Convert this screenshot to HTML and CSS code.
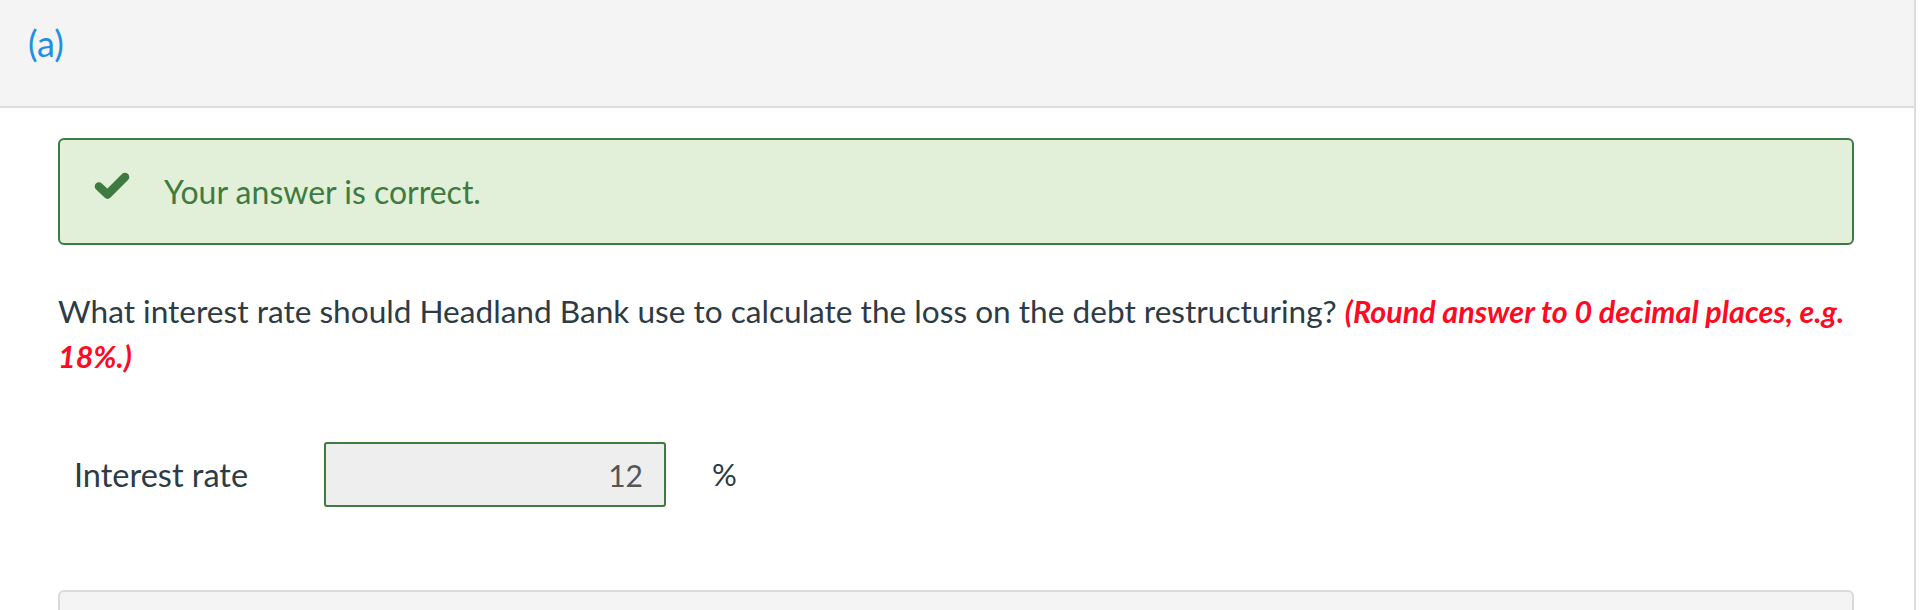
FILE: index.html
```html
<!DOCTYPE html>
<html lang="en">
<head>
<meta charset="utf-8">
<title>Part (a)</title>
<link rel="stylesheet" href="styles.css">
</head>
<body>
<div class="page">
  <header class="part-head">
    <span class="part-label">(a)</span>
  </header>
  <main class="part-body">
    <div class="feedback">
      <svg class="feedback-icon" width="36" height="28" viewBox="0 0 36 28" aria-hidden="true">
        <polyline points="5,14.5 13.5,22.5 31,5" fill="none" stroke="currentColor" stroke-width="8.5" stroke-linecap="round" stroke-linejoin="round"/>
      </svg>
      <span class="feedback-text">Your answer is correct.</span>
    </div>
    <p class="question">What interest rate should Headland Bank use to calculate the loss on the debt restructuring? <em class="hint">(Round answer to 0 decimal places, e.g. 18%.)</em></p>
    <div class="answer-row">
      <label class="answer-label" for="rate">Interest rate</label>
      <input class="answer-input" id="rate" type="text" value="12" readonly>
      <span class="answer-unit">%</span>
    </div>
    <div class="next-panel"></div>
  </main>
</div>
</body>
</html>
```
FILE: styles.css
```css
html, body {
  margin: 0;
  padding: 0;
  background: #ffffff;
}

body {
  font-family: Lato, "Open Sans", "Liberation Sans", sans-serif;
  color: #2d3b45;
}

.page {
  width: 1914px;
  border-right: 2px solid #dcdcdc;
  min-height: 610px;
  box-sizing: content-box;
}

.part-head {
  height: 106px;
  background: #f4f4f4;
  border-bottom: 2px solid #dcdcdc;
  display: flex;
  align-items: center;
  padding-left: 28px;
  box-sizing: content-box;
}

.part-label {
  font-size: 36px;
  color: #1e90e3;
  line-height: 1;
  margin-top: -20px;
}

.part-body {
  padding: 30px 60px 0 58px;
}

.feedback {
  height: 103px;
  border: 2px solid #3f7b40;
  border-radius: 6px;
  background: #e2f0d9;
  display: flex;
  align-items: center;
  padding-left: 34px;
  color: #3f7b40;
}

.feedback-icon {
  flex: none;
  margin-top: -12px;
}

.feedback-text {
  margin-left: 34px;
  font-size: 32px;
  line-height: 1;
}

.question {
  margin: 44px 0 0 0;
  font-size: 31.6px;
  line-height: 45px;
}

.hint {
  color: #ff0a23;
  font-weight: 700;
  font-style: italic;
  font-size: 0.965em;
}

.answer-row {
  margin-top: 63px;
  display: flex;
  align-items: center;
  padding-left: 16px;
}

.answer-label {
  width: 250px;
  font-size: 32.5px;
  line-height: 45px;
}

.answer-input {
  width: 342px;
  height: 65px;
  box-sizing: border-box;
  border: 2px solid #3f7b40;
  border-radius: 3px;
  background: #eeeeee;
  font-family: Lato, "Open Sans", sans-serif;
  font-size: 30px;
  color: #555555;
  text-align: right;
  padding: 0 21px 0 0;
  margin: 0;
  outline: none;
}

.answer-unit {
  margin-left: 46px;
  font-size: 31px;
  line-height: 45px;
}

.next-panel {
  margin-top: 83px;
  height: 100px;
  border: 2px solid #dadada;
  border-radius: 6px;
  background: #f4f4f4;
}
```
